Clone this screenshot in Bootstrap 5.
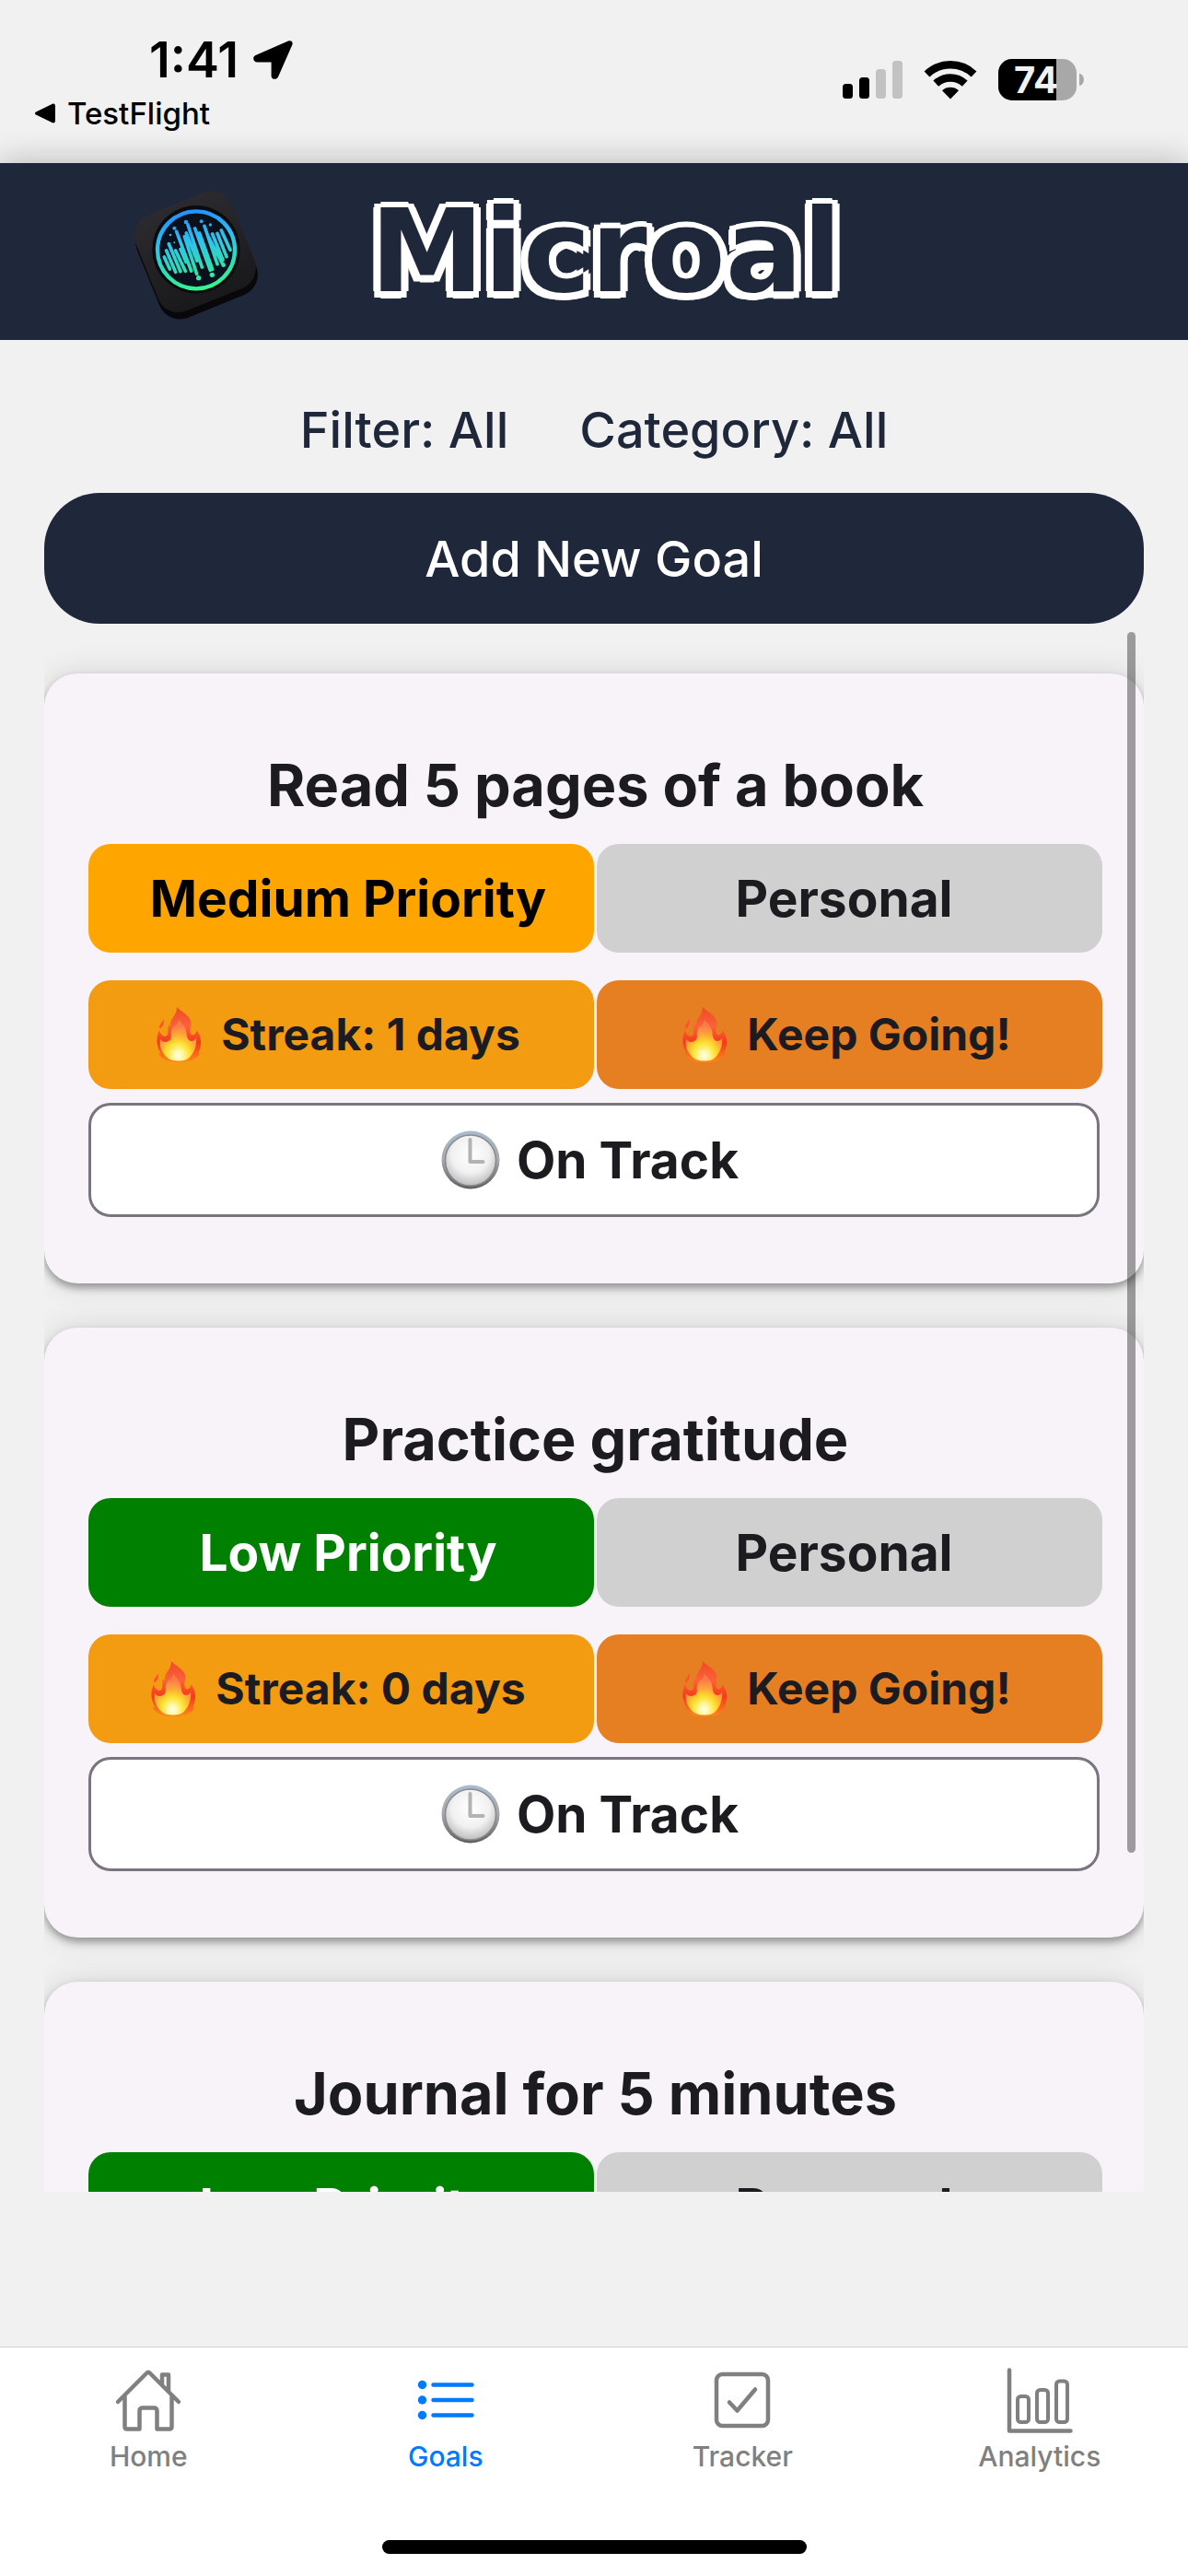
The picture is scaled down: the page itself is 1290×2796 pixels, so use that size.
<!DOCTYPE html>
<html lang="en">
<head>
<meta charset="utf-8">
<meta name="viewport" content="width=device-width, initial-scale=1">
<title>Microal – Goals</title>
<link href="https://cdn.jsdelivr.net/npm/bootstrap@5.3.0/dist/css/bootstrap.min.css" rel="stylesheet">
<style>
  body { font-family: Inter, "Liberation Sans", sans-serif; background: #f1f1f1; color: #1c1b20; }
  .navy { background: #1f273b; }

  /* device status bar */
  .status-bar { padding: 36px 113px 31px 38px; }
  .clock-time { font-size: 54px; line-height: 58px; font-weight: 600; padding-left: 124px; gap: 16px; color: #000; }
  .back-link { font-size: 33px; line-height: 46px; font-weight: 500; margin-top: 6px; gap: 13px; color: #000; }
  .status-icons { padding-top: 28px; gap: 23px; }
  .battery-text { font: 700 40px Inter, sans-serif; }

  /* brand header */
  .brand-bar { height: 192px; padding-left: 120px; gap: 102px; box-shadow: 0 -3px 32px rgba(0,0,0,.22); }
  .brand-name {
    font-family: "DejaVu Sans", sans-serif; font-weight: 700; font-size: 124px; line-height: 180px;
    color: #1f273b; -webkit-text-stroke: 16px #1f273b; paint-order: stroke fill; stroke-linejoin: round;
    text-shadow: -8px 0 #fff, 8px 0 #fff, 0 -6px #fff, 0 8px #fff, -7px -4px #fff, 6px -4px #fff, -7px 7px #fff, 6px 7px #fff;
  }

  /* toolbar */
  .toolbar { padding: 0 48px; background: #f1f1f1; position: relative; }
  .under-header { background: #f1f1f1; position: relative; }
  .filters { padding-top: 57px; gap: 77px; }
  .filter-btn { font-size: 54px; line-height: 82px; font-weight: 500; color: #1f273b; }
  .add-btn { margin-top: 27px; height: 142px; border-radius: 60px; font-size: 54px; font-weight: 500; color: #fff; }
  .add-btn:hover { background: #2a3450; color: #fff; }

  /* goal list */
  .goal-list { margin: 3px 48px 168px; padding-top: 51px; gap: 48px; min-height: 0; }
  .goal-card {
    padding: 72px 45px 72px 48px; border-radius: 36px; background: #f7f3f9;
    box-shadow: 0 5px 9px rgba(0,0,0,.34), 0 0 34px rgba(0,0,0,.12);
  }
  .goal-title { font-size: 63px; line-height: 98px; font-weight: 700; margin-bottom: 15px; }
  .pair { display: grid; grid-template-columns: 1fr 1fr; gap: 3px; }
  .pair + .pair { margin-top: 30px; }
  .tag { height: 118px; border-radius: 24px; font-size: 55px; font-weight: 700; padding-right: 12px; }
  .tag-priority { padding: 0 0 0 15px; }
  .tag-medium { background: #ffa500; color: #000; }
  .tag-low { background: #008000; color: #fff; }
  .tag-category { background: #d0d0d0; }
  .tag-small { font-size: 48px; gap: 16px; }
  .tag-streak { background: #f39c12; }
  .tag-cheer { background: #e67e22; }
  .tag-track { height: 124px; background: #fff; border: 3px solid #79747e; margin: 15px 3px 0 0; gap: 18px; padding-right: 9px; }
  .scroll-thumb { top: 6px; right: 9px; width: 9px; height: 78%; border-radius: 5px; background: rgba(0,0,0,.36); }

  /* bottom tabs */
  .tab-bar { border-top: 1px solid #d3d3d5; height: 249px; }
  .tab-link { color: #808080; font-size: 30px; line-height: 36px; font-weight: 500; padding-top: 18px; gap: 6px; text-decoration: none; }
  .tab-link.active { color: #007aff; }
  .home-bar { width: 461px; height: 15px; border-radius: 8px; background: #000; margin-bottom: 24px; }
</style>
</head>
<body class="vh-100 d-flex flex-column overflow-hidden">

<svg width="0" height="0" class="position-absolute" aria-hidden="true">
  <defs>
    <linearGradient id="flameOuter" x1="0" y1="0" x2="0" y2="1">
      <stop offset="0" stop-color="#ee4a26"/><stop offset=".35" stop-color="#fb6238"/><stop offset=".65" stop-color="#f53a18"/><stop offset="1" stop-color="#ff8a1c"/>
    </linearGradient>
    <radialGradient id="flameInner" cx=".5" cy=".88" r=".72">
      <stop offset="0" stop-color="#fffff0"/><stop offset=".2" stop-color="#fff79a"/><stop offset=".45" stop-color="#ffdf2c"/><stop offset=".72" stop-color="#ffa53a"/><stop offset="1" stop-color="#ff7a4a"/>
    </radialGradient>
    <linearGradient id="clockRim" x1="0" y1="0" x2="0" y2="1">
      <stop offset="0" stop-color="#a9bbcd"/><stop offset=".5" stop-color="#a8a8a8"/><stop offset="1" stop-color="#5e5e5e"/>
    </linearGradient>
    <radialGradient id="clockFace" cx=".5" cy=".38" r=".62">
      <stop offset="0" stop-color="#fff"/><stop offset=".6" stop-color="#f1f1f1"/><stop offset="1" stop-color="#bdbdbd"/>
    </radialGradient>
    <linearGradient id="neon" gradientUnits="userSpaceOnUse" x1="250" y1="125" x2="295" y2="378">
      <stop offset="0" stop-color="#2492ff"/><stop offset=".4" stop-color="#2fc4ea"/><stop offset=".75" stop-color="#2fe0b0"/><stop offset="1" stop-color="#35f590"/>
    </linearGradient>
    <linearGradient id="tile" x1="0" y1="0" x2="0" y2="1">
      <stop offset="0" stop-color="#2b2b2f"/><stop offset="1" stop-color="#19191c"/>
    </linearGradient>
  </defs>
  <symbol id="flame" viewBox="0 0 48 60">
    <path fill="url(#flameOuter)" d="M22 0c4 5 13 8 15 15 1.500 5-2 9 0 14 1.500 3 6 1 6.500-3.500 4.500 5 5.500 12 4 18-.6 3-1.500 5.500-2.500 7.500l2.500-1c-3 6-10 10-23.500 10S5 56 2 50l3 1C1 45-1 36 1.500 29c.5-1.500 1-3 1-4C4 29 7 33 10.500 31.500c3.500-2 .5-8 3-12.500.5 1 .8 1.500 1.500 2C14 12 22 10 22 0z"/>
    <path fill="#ff5030" d="M7.500 13c-1 4-5.500 6-4 10.500C7 22 8.500 17 7.500 13z"/>
    <path fill="url(#flameInner)" d="M24 13c2 5 8 7 8.500 15 .3 5 2 9 5.500 9 2 0 4-1.500 5-3.500 1 8-2 16-7 21-3 3-7 4-12 4s-10-1-13-4C6 50 2.500 43 4 35c2 3 5.500 4 9 2 6-3 0-9 5-15 2.500-2.500 6.500-4.500 6-9z"/>
  </symbol>
  <symbol id="clock" viewBox="0 0 64 64">
    <circle cx="32" cy="32" r="31.500" fill="url(#clockRim)"/>
    <circle cx="32" cy="32.500" r="27.500" fill="url(#clockFace)" stroke="#858b91" stroke-width="1.500"/>
    <path d="M31.500 10v24h14" fill="none" stroke="#b3b3b5" stroke-width="4" stroke-linecap="round" stroke-linejoin="round"/>
  </symbol>
</svg>

<div class="status-bar d-flex justify-content-between align-items-start">
  <div>
    <div class="clock-time d-flex align-items-center">1:41
      <svg width="43" height="42" viewBox="0 0 43 42" aria-hidden="true"><path d="M38 .6c3-1.400 5.400.6 4.400 3.800L27 39.500c-1.400 3.400-7.400 3.200-7.400-1V23.500H4.500C0 23.500-1.500 18 2.500 16z"/></svg>
    </div>
    <a href="#" class="back-link d-flex align-items-center text-decoration-none">
      <svg width="22" height="22" viewBox="0 0 22 22" aria-hidden="true"><path d="M18.500 1C20.500 0 22 1 22 3v16c0 2-1.500 3-3.500 2L1.500 12.800c-2-1-2-2.600 0-3.600z"/></svg>TestFlight</a>
  </div>
  <div class="status-icons d-flex align-items-center">
    <svg width="65" height="45" viewBox="0 0 65 45" aria-label="Signal"><rect y="27" width="11" height="16" rx="3.500"/><rect x="18" y="20" width="11" height="23" rx="3.500"/><g fill="#c2c2c2"><rect x="36" y="11" width="11" height="32" rx="3.500"/><rect x="54" y="2" width="11" height="41" rx="3.500"/></g></svg>
    <svg width="58" height="45" viewBox="0 0 58 45" aria-label="Wi-Fi"><g fill="none" stroke="#000" stroke-width="8.500"><path d="M3.500 16.500a37 37 0 0 1 51 0"/><path d="M13.300 26.700a23 23 0 0 1 31.400 0"/></g><path d="M29 43.500l-9-9.200a13.500 13.500 0 0 1 18 0z"/></svg>
    <svg width="93" height="45" viewBox="0 0 93 45" aria-label="Battery 74 percent"><clipPath id="cell"><rect width="85" height="45" rx="15"/></clipPath><g clip-path="url(#cell)"><rect width="85" height="45" fill="#a8a8a8"/><rect width="63" height="45"/></g><path d="M88 16c6.500 1 6.500 12 0 13z" fill="#a8a8a8"/><text x="41" y="37" text-anchor="middle" fill="#f1f1f1" class="battery-text">74</text></svg>
  </div>
</div>

<header class="brand-bar navy d-flex align-items-center flex-shrink-0">
  <svg width="180" height="170" viewBox="0 0 540 510" aria-hidden="true">
    <g transform="rotate(-22 277 265)">
      <rect x="106" y="108" width="340" height="338" rx="72" fill="#08080b"/>
      <rect x="110" y="88" width="338" height="336" rx="72" fill="url(#tile)"/>
    </g>
    <circle cx="279" cy="248" r="143" fill="#0a0b0f"/>
    <circle cx="279" cy="250" r="126" fill="#0a111c" stroke="url(#neon)" stroke-width="13"/>
    <g stroke="url(#neon)" stroke-width="11" stroke-linecap="round" fill="none">
      <path d="M175 273l18 39M182 252l30 70M190 230l38 90M212 252l32 67M215 190l48 128M228 247l18 42M241 206l40 122M252 168l46 138M247 195l35 90M275 180l50 136M290 195l42 118M306 172l42 124M318 205l48 92M332 198l34 84M348 196l30 76M361 186l29 64"/>
    </g>
    <g fill="url(#neon)"><circle cx="208" cy="179" r="6"/><circle cx="246" cy="159" r="7"/><circle cx="296" cy="157" r="6"/><circle cx="325" cy="168" r="5"/><circle cx="195" cy="201" r="4"/><circle cx="208" cy="226" r="3"/><circle cx="287" cy="341" r="8"/><circle cx="331" cy="331" r="8"/><circle cx="368" cy="299" r="7"/></g>
  </svg>
  <h1 class="brand-name mb-0">Microal</h1>
</header>

<div class="toolbar">
  <div class="filters d-flex justify-content-center">
    <button type="button" class="filter-btn border-0 bg-transparent p-0">Filter: All</button>
    <button type="button" class="filter-btn border-0 bg-transparent p-0">Category: All</button>
  </div>
  <button type="button" class="btn add-btn navy w-100 border-0 p-0">Add New Goal</button>
</div>

<main class="goal-list position-relative flex-grow-1 d-flex flex-column overflow-hidden">
  <article class="goal-card flex-shrink-0">
    <h2 class="goal-title text-center">Read 5 pages of a book</h2>
    <div class="pair">
      <span class="tag tag-priority tag-medium d-flex align-items-center justify-content-center">Medium Priority</span>
      <span class="tag tag-category d-flex align-items-center justify-content-center">Personal</span>
    </div>
    <div class="pair">
      <span class="tag tag-small tag-streak d-flex align-items-center justify-content-center"><svg width="60" height="60" aria-hidden="true"><use href="#flame"/></svg>Streak: 1 days</span>
      <span class="tag tag-small tag-cheer d-flex align-items-center justify-content-center"><svg width="60" height="60" aria-hidden="true"><use href="#flame"/></svg>Keep Going!</span>
    </div>
    <div class="tag tag-track d-flex align-items-center justify-content-center"><svg width="64" height="64" aria-hidden="true"><use href="#clock"/></svg>On Track</div>
  </article>

  <article class="goal-card flex-shrink-0">
    <h2 class="goal-title text-center">Practice gratitude</h2>
    <div class="pair">
      <span class="tag tag-priority tag-low d-flex align-items-center justify-content-center">Low Priority</span>
      <span class="tag tag-category d-flex align-items-center justify-content-center">Personal</span>
    </div>
    <div class="pair">
      <span class="tag tag-small tag-streak d-flex align-items-center justify-content-center"><svg width="60" height="60" aria-hidden="true"><use href="#flame"/></svg>Streak: 0 days</span>
      <span class="tag tag-small tag-cheer d-flex align-items-center justify-content-center"><svg width="60" height="60" aria-hidden="true"><use href="#flame"/></svg>Keep Going!</span>
    </div>
    <div class="tag tag-track d-flex align-items-center justify-content-center"><svg width="64" height="64" aria-hidden="true"><use href="#clock"/></svg>On Track</div>
  </article>

  <article class="goal-card flex-shrink-0">
    <h2 class="goal-title text-center">Journal for 5 minutes</h2>
    <div class="pair">
      <span class="tag tag-priority tag-low d-flex align-items-center justify-content-center">Low Priority</span>
      <span class="tag tag-category d-flex align-items-center justify-content-center">Personal</span>
    </div>
  </article>
  <div class="scroll-thumb position-absolute"></div>
</main>

<footer class="tab-bar bg-white d-flex flex-column justify-content-between flex-shrink-0">
  <nav class="row g-0 text-center" aria-label="Main">
    <a href="#" class="tab-link col d-flex flex-column align-items-center">
      <svg width="76" height="76" viewBox="0 0 76 76" fill="none" stroke="currentColor" stroke-width="4.500" stroke-linecap="round" stroke-linejoin="round" aria-hidden="true"><path d="M5 41L36 10q2-2 4 0l31 31M12.500 35v33q0 2.500 2.500 2.500h13.500V51q0-3.500 3.500-3.500h12q3.500 0 3.500 3.500v19.500H61q2.500 0 2.500-2.500V35M53 22V11.500h7V29"/></svg>
      Home</a>
    <a href="#" class="tab-link active col d-flex flex-column align-items-center" aria-current="page">
      <svg width="76" height="76" viewBox="0 0 76 76" fill="currentColor" aria-hidden="true"><circle cx="12.500" cy="22.500" r="4.700"/><circle cx="12.500" cy="39" r="4.700"/><circle cx="12.500" cy="55.500" r="4.700"/><path d="M24.500 22.500h42M24.500 39h42M24.500 55.500h42" stroke="currentColor" stroke-width="4.500" stroke-linecap="round"/></svg>
      Goals</a>
    <a href="#" class="tab-link col d-flex flex-column align-items-center">
      <svg width="76" height="76" viewBox="0 0 76 76" fill="none" stroke="currentColor" stroke-width="4.500" stroke-linecap="round" stroke-linejoin="round" aria-hidden="true"><rect x="10" y="11" width="56" height="56" rx="6.500"/><path d="M24 41.500l8.500 9L52 27.500"/></svg>
      Tracker</a>
    <a href="#" class="tab-link col d-flex flex-column align-items-center">
      <svg width="76" height="76" viewBox="0 0 76 76" fill="none" stroke="currentColor" stroke-width="4.500" stroke-linecap="round" stroke-linejoin="round" aria-hidden="true"><path d="M5 6.500v66h66.500"/><g stroke-width="4"><rect x="14" y="35" width="12" height="28" rx="3.500"/><rect x="35" y="28" width="12" height="35" rx="3.500"/><rect x="56" y="18.500" width="12" height="44.500" rx="3.500"/></g></svg>
      Analytics</a>
  </nav>
  <div class="home-bar mx-auto"></div>
</footer>

<script src="https://cdn.jsdelivr.net/npm/bootstrap@5.3.0/dist/js/bootstrap.bundle.min.js"></script>
</body>
</html>
